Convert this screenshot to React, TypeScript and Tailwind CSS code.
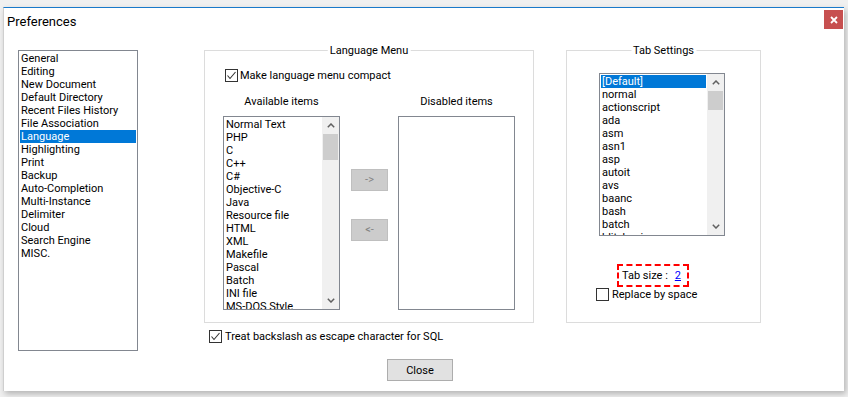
import React from "react";

const FONT = "font-['Roboto','Liberation_Sans',sans-serif]";

function Chevron({ up }: { up: boolean }) {
  return (
    <svg width="8" height="5" viewBox="0 0 8 5">
      <polyline
        points={up ? "0.8,4.2 4,1 7.2,4.2" : "0.8,0.8 4,4 7.2,0.8"}
        fill="none"
        stroke="#606060"
        strokeWidth="1.5"
      />
    </svg>
  );
}

function Scrollbar({ thumb }: { thumb: number }) {
  return (
    <div className="w-[17px] h-full shrink-0 flex flex-col bg-[#f0f0f0]">
      <div className="h-[17px] flex items-center justify-center">
        <Chevron up />
      </div>
      <div className="mx-[1px] bg-[#cdcdcd]" style={{ height: thumb }} />
      <div className="flex-1" />
      <div className="h-[17px] flex items-center justify-center">
        <Chevron up={false} />
      </div>
    </div>
  );
}

function ListBox({
  items,
  selected,
  w,
  h,
  thumb,
}: {
  items: string[];
  selected?: number;
  w: number;
  h: number;
  thumb?: number;
}) {
  return (
    <div
      className="border border-[#828790] bg-white flex overflow-hidden shrink-0"
      style={{ width: w, height: h }}
    >
      <div className="flex-1 p-[1px] overflow-hidden">
        {items.map((it, i) => (
          <div
            key={i}
            className={
              "h-[13px] leading-[13px] pl-[1px] whitespace-nowrap " +
              (i === selected ? "bg-[#0078d7] text-white" : "text-black")
            }
          >
            {it}
          </div>
        ))}
      </div>
      {thumb !== undefined && <Scrollbar thumb={thumb} />}
    </div>
  );
}

function Check({ checked }: { checked: boolean }) {
  return (
    <div className="w-[13px] h-[13px] border border-[#333333] bg-white shrink-0 flex items-center justify-center">
      {checked && (
        <svg width="11" height="11" viewBox="0 0 11 11">
          <polyline points="1.5,5.5 4,8.5 9.5,2" fill="none" stroke="#333333" strokeWidth="1.1" />
        </svg>
      )}
    </div>
  );
}

function Group({
  title,
  w,
  h,
  children,
}: {
  title: string;
  w: number;
  h: number;
  children: React.ReactNode;
}) {
  return (
    <div
      className="relative border border-[#dcdcdc] shrink-0"
      style={{ width: w, height: h }}
    >
      <span className="absolute -top-[7px] left-1/2 -translate-x-1/2 bg-white px-[2px] leading-[13px] whitespace-nowrap">
        {title}
      </span>
      {children}
    </div>
  );
}

export default function App() {
  const left = [
    "General",
    "Editing",
    "New Document",
    "Default Directory",
    "Recent Files History",
    "File Association",
    "Language",
    "Highlighting",
    "Print",
    "Backup",
    "Auto-Completion",
    "Multi-Instance",
    "Delimiter",
    "Cloud",
    "Search Engine",
    "MISC.",
  ];
  const avail = [
    "Normal Text",
    "PHP",
    "C",
    "C++",
    "C#",
    "Objective-C",
    "Java",
    "Resource file",
    "HTML",
    "XML",
    "Makefile",
    "Pascal",
    "Batch",
    "INI file",
    "MS-DOS Style",
    "ASP",
  ];
  const tabs = [
    "[Default]",
    "normal",
    "actionscript",
    "ada",
    "asm",
    "asn1",
    "asp",
    "autoit",
    "avs",
    "baanc",
    "bash",
    "batch",
    "blitzbasic",
    "c",
  ];

  return (
    <div className={"w-[848px] h-[397px] bg-[#f0f0f0] overflow-hidden text-[11px] text-black " + FONT}>
      <div className="ml-[3px] mt-[7px] w-[841px] h-[384px] bg-white border-t border-t-[#1979ca] border-l border-l-[#cfcfcf] shadow-[2px_3px_6px_rgba(0,0,0,0.25)]">
        {/* Title bar */}
        <div className="h-[42px] flex items-start pl-[3px] pr-[1px] pt-[2px]">
          <span className="mt-[4px] text-[13px] leading-[15px]">Preferences</span>
          <div className="ml-auto w-[19px] h-[19px] bg-[#c75050] flex items-center justify-center">
            <svg width="8" height="8" viewBox="0 0 8 8">
              <path d="M1 1 L7 7 M7 1 L1 7" stroke="white" strokeWidth="1.8" />
            </svg>
          </div>
        </div>

        {/* Main row */}
        <div className="flex items-start pl-[14px]">
          <ListBox items={left} selected={6} w={120} h={301} />

          <div className="ml-[66px] flex flex-col">
            <Group title="Language Menu" w={330} h={273}>
              <div className="pt-[18px] pl-[20px] flex items-center gap-[2px]">
                <Check checked />
                <span className="leading-[13px]">Make language menu compact</span>
              </div>
              <div className="mt-[13px] pl-[18px] flex items-start">
                <div className="flex flex-col">
                  <div className="h-[13px] leading-[13px] text-center">Available items</div>
                  <div className="mt-[8px]">
                    <ListBox items={avail} w={117} h={194} thumb={26} />
                  </div>
                </div>
                <div className="ml-[11px] pt-[74px] flex flex-col">
                  <div className="w-[37px] h-[22px] bg-[#cccccc] border border-[#bfbfbf] text-[#838383] flex items-center justify-center leading-[12px]">
                    -&gt;
                  </div>
                  <div className="mt-[28px] w-[37px] h-[22px] bg-[#cccccc] border border-[#bfbfbf] text-[#838383] flex items-center justify-center leading-[12px]">
                    &lt;-
                  </div>
                </div>
                <div className="ml-[10px] flex flex-col">
                  <div className="h-[13px] leading-[13px] text-center">Disabled items</div>
                  <div className="mt-[8px]">
                    <ListBox items={[]} w={117} h={194} />
                  </div>
                </div>
              </div>
            </Group>
            <div className="mt-[7px] ml-[5px] flex items-center gap-[3px]">
              <Check checked />
              <span className="leading-[13px]">Treat backslash as escape character for SQL</span>
            </div>
          </div>

          <div className="ml-[32px]">
            <Group title="Tab Settings" w={195} h={273}>
              <div className="pt-[22px] pl-[32px]">
                <ListBox items={tabs} selected={0} w={126} h={163} thumb={19} />
              </div>
              <div className="mt-[28px] ml-[50px] w-[72px] h-[23px] border-2 border-dashed border-[#ff0000] flex items-center pl-[3px] leading-[13px]">
                <span>Tab size :</span>
                <span className="ml-[7px] text-[#0000ff] underline">2</span>
              </div>
              <div className="mt-[1px] ml-[29px] flex items-center gap-[3px]">
                <Check checked={false} />
                <span className="leading-[13px]">Replace by space</span>
              </div>
            </Group>
          </div>
        </div>

        {/* Close */}
        <div className="mt-[8px] pl-[383px]">
          <div className="w-[66px] h-[22px] bg-[#e1e1e1] border border-[#adadad] flex items-center justify-center leading-[13px]">
            Close
          </div>
        </div>
      </div>
    </div>
  );
}
